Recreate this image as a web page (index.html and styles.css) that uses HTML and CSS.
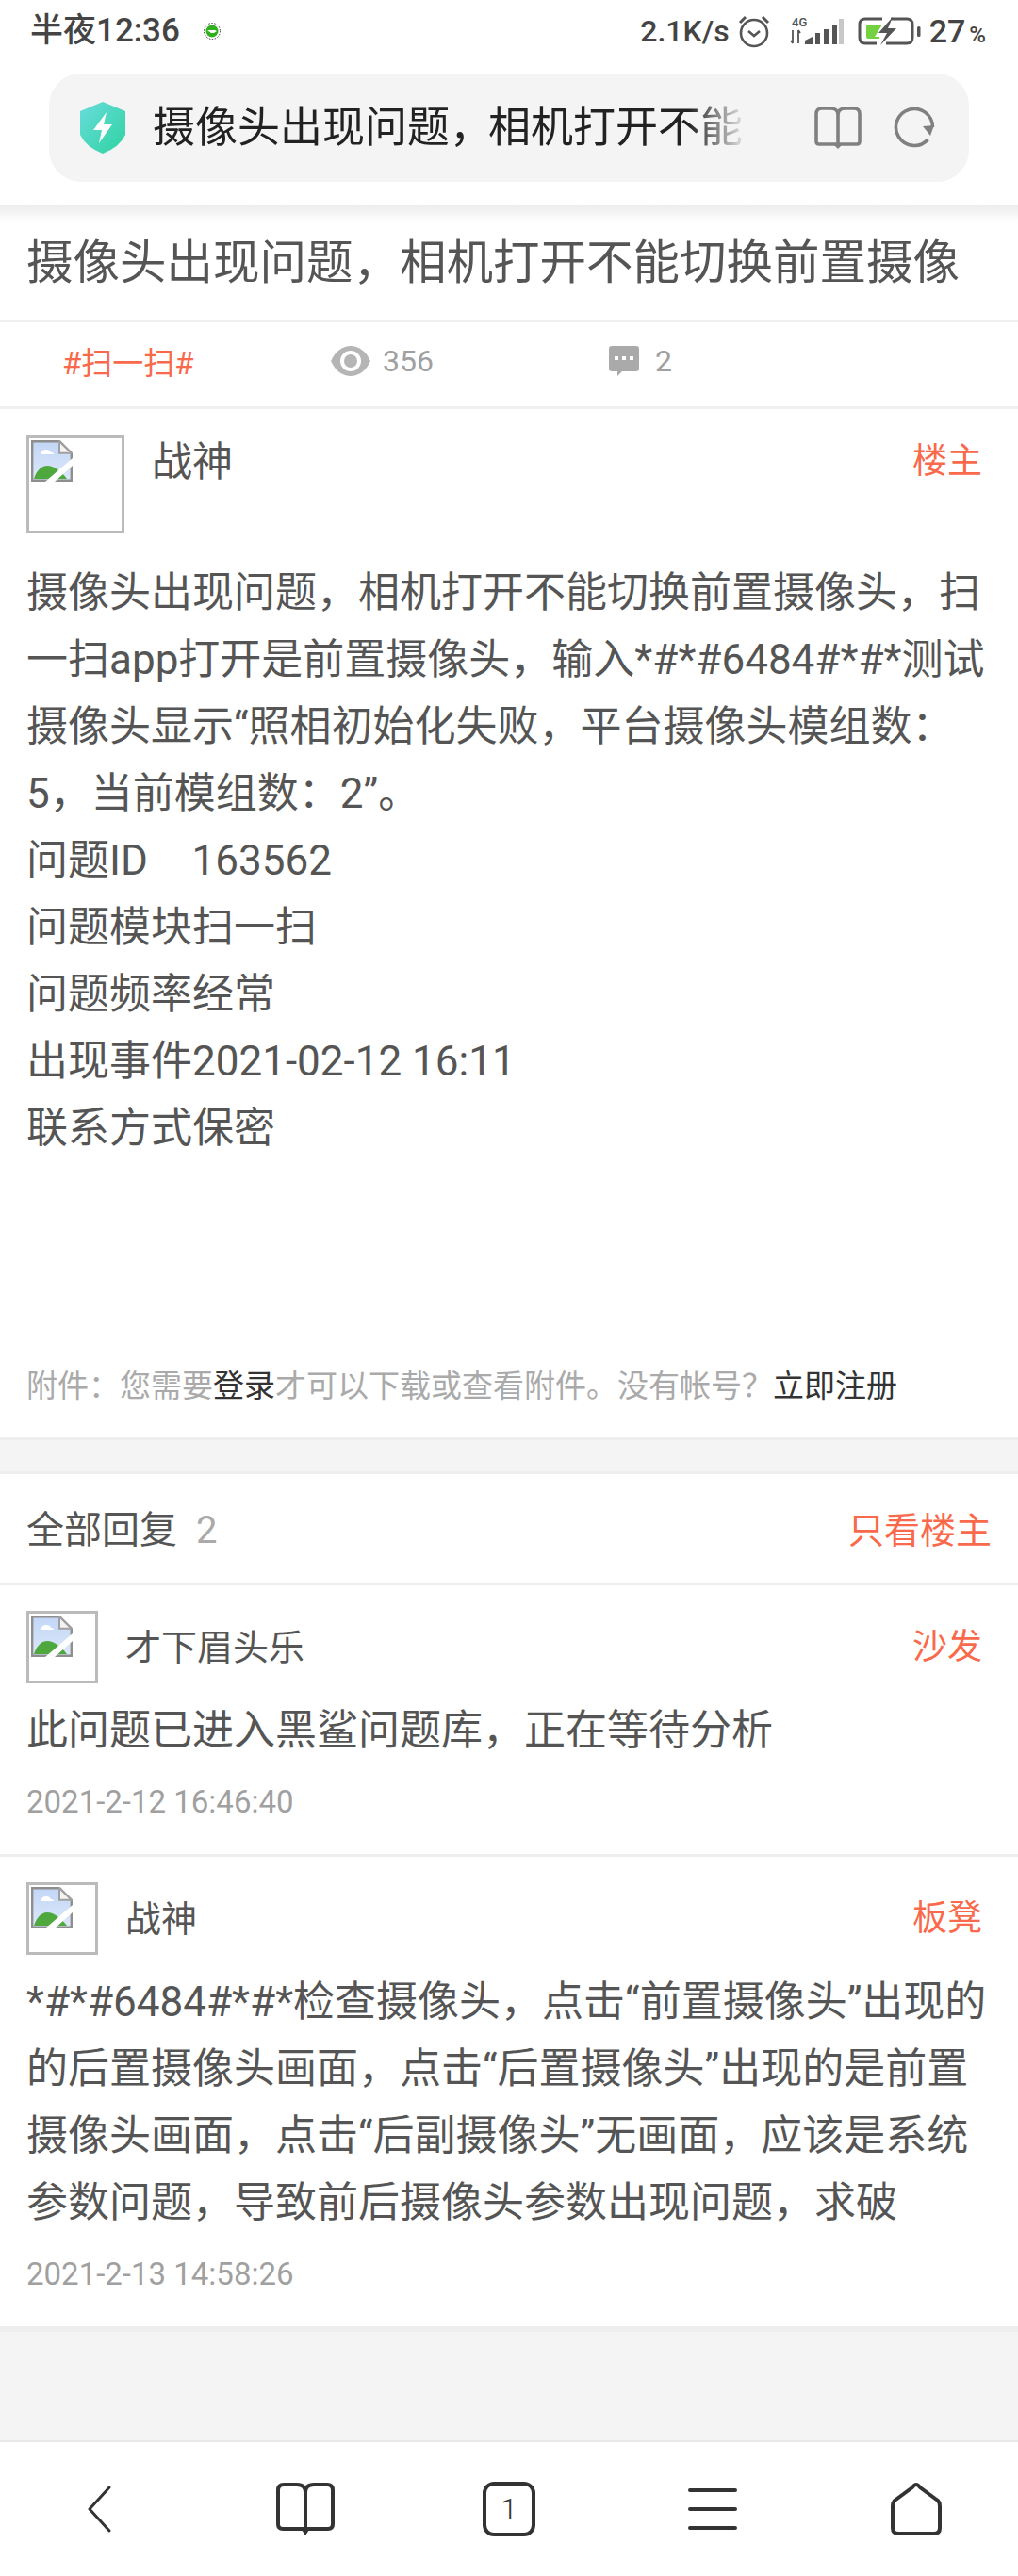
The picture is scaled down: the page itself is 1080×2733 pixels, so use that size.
FILE: index.html
```html
<!DOCTYPE html>
<html lang="zh-CN">
<head>
  <meta charset="UTF-8">
  <title>摄像头出现问题，相机打开不能切换前置摄像</title>
  <link rel="stylesheet" href="styles.css">
</head>
<body>
  <svg class="defs" width="0" height="0">
    <defs>
      <linearGradient id="sky" x1="0" y1="0" x2="0" y2="1">
        <stop offset="0" stop-color="#c2d6f6"/>
        <stop offset="1" stop-color="#dce8fa"/>
      </linearGradient>
    </defs>
    <symbol id="broken" viewBox="0 0 44 44">
      <path d="M1.2 1.2h29l12.6 12.6v29H1.2z" fill="url(#sky)" stroke="#8e8e8e" stroke-width="2.4"/>
      <path d="M30 1.2v12.6h12.8z" fill="#f4f4f4" stroke="#a0a0a0" stroke-width="2"/>
      <path d="M10 15q1-5 6-5 4 0 5 3 3 0 3 2z" fill="#fff"/>
      <path d="M3 41C6 31 12 27 17 27c7 0 15 6 21 14z" fill="#4fa83d"/>
      <path d="M15 44l29-25v8L25 44z" fill="#fff"/>
    </symbol>
  </svg>

  <div class="statusbar">
    <div class="status-left">
      <span class="clock">半夜12:36</span>
      <svg class="wechat" width="18" height="18" viewBox="0 0 18 18">
        <circle cx="9" cy="9" r="8.5" fill="#fff" stroke="#333" stroke-dasharray="1.5 1.5"/>
        <circle cx="9" cy="9" r="6.5" fill="#2fb01c"/>
        <path d="M4 8h8l2 1-3 2H8z" fill="#fff"/>
      </svg>
    </div>
    <div class="status-right">
      <span class="speed">2.1K/s</span>
      <svg class="alarm" width="34" height="36" viewBox="0 0 34 36" fill="none" stroke="#555">
        <circle cx="17" cy="20" r="14" stroke-width="2.6"/>
        <path d="M11 18l6 5 6-5" stroke-width="2.6"/>
        <path d="M2 9l6-6M32 9l-6-6" stroke-width="3"/>
      </svg>
      <svg class="signal" width="58" height="34" viewBox="0 -4 58 34">
        <text x="3" y="10" class="signal-text">4G</text>
        <path d="M4 14v14M2 25l2 3M10 14v14M10 14l2 3" stroke="#555" stroke-width="1.8" fill="none"/>
        <path d="M17 29v-4l8-4v8zM28 29V17h5v12zM37 29V13h5v16zM46 29V8h5v21z" fill="#555"/>
        <path d="M53 29V2h5v27z" fill="#c8c8c8"/>
      </svg>
      <svg class="battery" width="68" height="30" viewBox="0 0 68 30" fill="none">
        <path d="M26 2H8Q2 2 2 8v14q0 6 6 6h12M35 2h17q6 0 6 6v14q0 6-6 6H30" stroke="#555" stroke-width="3"/>
        <path d="M9 10q0-2 2-2h15l-8 13h5v2H11q-2 0-2-2z" fill="#74d13f"/>
        <path d="M37 0L22 17h9l-7 13 17-18h-9z" fill="#555"/>
        <rect x="63" y="10" width="3.5" height="11" rx="1.5" fill="#555"/>
      </svg>
      <span class="level">27<small>%</small></span>
    </div>
  </div>

  <div class="addressbar">
    <svg class="shield" width="48" height="55" viewBox="0 0 48 55">
      <defs>
        <linearGradient id="sh" x1="0" y1="0" x2="1" y2="1">
          <stop offset="0" stop-color="#6adcdc"/>
          <stop offset="1" stop-color="#2dd3a0"/>
        </linearGradient>
      </defs>
      <path d="M24 0l24 10v25q-6 13-24 20Q6 48 0 35V10z" fill="url(#sh)"/>
      <path d="M28 11L14 30h9l-3 14 14-20h-9z" fill="#fff"/>
    </svg>
    <div class="address-text">摄像头出现问题<span class="addr-comma">，</span>相机打开不能</div>
    <svg class="addr-book" width="50" height="46" viewBox="0 0 50 46" fill="none" stroke="#808080" stroke-width="3.6">
      <path d="M25 9Q25 2 17 2H8Q2 2 2 8v29q0 3 3 3h40q3 0 3-3V8q0-6-6-6h-9q-8 0-8 7v31"/>
      <path d="M21 41l4 4 4-4z" fill="#808080" stroke="none"/>
    </svg>
    <svg class="addr-reload" width="44" height="44" viewBox="0 0 44 44" fill="none" stroke="#808080" stroke-width="3.6">
      <path d="M36.5 34A19.5 19.5 0 1 1 41.5 21"/>
      <path d="M31 20l12-1-4 11z" fill="#808080" stroke="none"/>
    </svg>
  </div>
  <div class="toolbar-shadow"></div>

  <h1 class="title">摄像头出现问题，相机打开不能切换前置摄像</h1>

  <div class="meta">
    <span class="meta-tag">#扫一扫#</span>
    <span class="meta-views">
      <svg width="44" height="34" viewBox="0 0 44 34">
        <path d="M1 17C6 6 14 1 22 1s16 5 21 16c-5 11-13 16-21 16S6 28 1 17z" fill="#b5b5b5"/>
        <circle cx="22" cy="17" r="11" fill="#fff"/>
        <circle cx="22" cy="17" r="7" fill="#b5b5b5"/>
      </svg>
      356
    </span>
    <span class="meta-replies">
      <svg width="34" height="33" viewBox="0 0 34 33">
        <path d="M4 1h26q3 0 3 3v21q0 3-3 3H15l-5 5v-5H4q-3 0-3-3V4q0-3 3-3z" fill="#aaa"/>
        <path d="M7 12h4v4H7zM15 12h4v4h-4zM23 12h4v4h-4z" fill="#fff"/>
      </svg>
      2
    </span>
  </div>

  <div class="post">
    <div class="post-head">
      <div class="avatar avatar-big"><svg width="44" height="44"><use href="#broken"/></svg></div>
      <div class="post-name">战神</div>
      <div class="floor">楼主</div>
    </div>
    <div class="post-body">
      摄像头出现问题，相机打开不能切换前置摄像头，扫一扫app打开是前置摄像头，输入*#*#6484#*#*测试摄像头显示“照相初始化失败，平台摄像头模组数：5，当前模组数：2”。<br>
      问题ID&nbsp;&nbsp;&nbsp;&nbsp;<span class="qid">163562</span><br>
      问题模块扫一扫<br>
      问题频率经常<br>
      出现事件2021-02-12 16:11<br>
      联系方式保密
    </div>
    <div class="attach">附件：您需要<a>登录</a>才可以下载或查看附件。没有帐号？<a>立即注册</a></div>
  </div>

  <div class="gap"></div>

  <div class="reply-head">
    <div>全部回复<span class="reply-count">2</span></div>
    <div class="only-op">只看楼主</div>
  </div>

  <div class="reply reply-first">
    <div class="reply-top">
      <div class="avatar"><svg width="44" height="44"><use href="#broken"/></svg></div>
      <div class="reply-name">才下眉头乐</div>
      <div class="floor">沙发</div>
    </div>
    <div class="reply-text">此问题已进入黑鲨问题库，正在等待分析</div>
    <div class="reply-date">2021-2-12 16:46:40</div>
  </div>

  <div class="reply reply-last">
    <div class="reply-top">
      <div class="avatar"><svg width="44" height="44"><use href="#broken"/></svg></div>
      <div class="reply-name">战神</div>
      <div class="floor">板凳</div>
    </div>
    <div class="reply-text">*#*#6484#*#*检查摄像头，点击“前置摄像头”出现的的后置摄像头画面，点击“后置摄像头”出现的是前置摄像头画面，点击“后副摄像头”无画面，应该是系统参数问题，导致前后摄像头参数出现问题，求破</div>
    <div class="reply-date">2021-2-13 14:58:26</div>
  </div>

  <div class="bottom-space"></div>

  <div class="navbar">
    <svg class="nav-back" width="26" height="50" viewBox="0 0 26 50" fill="none" stroke="#333" stroke-width="3" stroke-linecap="round" stroke-linejoin="round">
      <path d="M24 2L3 25l21 23"/>
    </svg>
    <svg width="62" height="56" viewBox="0 0 62 56" fill="none" stroke="#333" stroke-width="4">
      <path d="M31 10Q31 2 22 2H8Q2 2 2 8v36q0 5 5 5h48q5 0 5-5V8q0-6-6-6H40q-9 0-9 8v39"/>
      <path d="M27 50l4 6 4-6z" fill="#333" stroke="none"/>
    </svg>
    <div class="nav-tabs">1</div>
    <div class="nav-menu"><i></i><i></i><i></i></div>
    <svg width="54" height="56" viewBox="0 0 54 56" fill="none" stroke="#333" stroke-width="4" stroke-linejoin="round">
      <path d="M27 2Q25 2 23 5L4 19q-2 2-2 6v23q0 6 6 6h38q6 0 6-6V25q0-4-2-6L31 5q-2-3-4-3z"/>
    </svg>
  </div>
</body>
</html>
```
FILE: styles.css
```css
* { box-sizing: border-box; }
html, body { margin: 0; padding: 0; }
body { width: 1080px; height: 2733px; background: #fff; color: #555; font-family: Roboto, "Noto Sans CJK SC", sans-serif; overflow: hidden; }
.defs { position: absolute; }
a { color: #333; }

.statusbar { height: 78px; display: flex; justify-content: space-between; align-items: center; padding: 0 34px 12px 32px; color: #444; }
.status-left, .status-right { display: flex; align-items: center; }
.clock { font-size: 35px; font-weight: 500; line-height: 40px; }
.wechat { margin-left: 25px; }
.speed { font-size: 32px; font-weight: 500; }
.alarm { margin-left: 9px; }
.signal { margin: -4px 0 0 20px; }
.signal-text { font: 500 13px Roboto, sans-serif; fill: #555; }
.battery { margin-left: 15px; }
.level { font-size: 34px; font-weight: 500; margin-left: 8px; }
.level small { font-size: 24px; margin-left: 4px; }

.addressbar { height: 115px; margin: 0 52px; padding: 0 14px 0 33px; background: #f4f4f4; border-radius: 34px; display: flex; align-items: center; }
.address-text { width: 632px; margin-left: 29px; font-size: 45px; line-height: 60px; color: #222; white-space: nowrap; -webkit-mask-image: linear-gradient(to right, #000 90%, transparent 100%); mask-image: linear-gradient(to right, #000 90%, transparent 100%); }
.addr-comma { margin-right: -4px; }
.addr-book { margin-left: 70px; }
.addr-reload { margin-left: 34px; }
.toolbar-shadow { height: 17px; margin-top: 25px; background: linear-gradient(#ececec, #fff); }

.title { margin: 0; height: 107px; padding: 9px 0 0 28px; font-size: 49.5px; font-weight: 400; line-height: 70px; color: #555; white-space: nowrap; border-bottom: 3px solid #f0f0f0; }
.meta { height: 92px; padding-bottom: 8px; display: flex; align-items: center; border-bottom: 3px solid #f0f0f0; font-size: 33px; color: #a0a0a0; }
.meta-tag { width: 350px; padding-left: 66px; color: #f96a4c; }
.meta-views { width: 295px; display: flex; align-items: center; gap: 12px; font-size: 32px; }
.meta-replies { display: flex; align-items: center; gap: 16px; font-size: 32px; }

.post { padding: 28px 38px 0 28px; height: 1094px; border-bottom: 3px solid #eee; }
.post-head { height: 104px; display: flex; align-items: flex-start; }
.avatar { width: 76px; height: 77px; border: 3px solid #bbb; padding: 2px; flex: none; }
.avatar svg { display: block; }
.avatar-big { width: 104px; height: 104px; }
.post-name { margin-left: 29px; padding-top: 3px; font-size: 43px; line-height: 50px; color: #555; flex: 1; }
.floor { padding-top: 3px; font-size: 37px; line-height: 50px; color: #f96a4c; }
.post-body { margin: 28px -8px 0 0; font-size: 44px; line-height: 71px; color: #555; }
.qid { margin-left: 3px; }
.attach { margin-top: 216px; font-size: 33px; line-height: 44px; color: #aaa; white-space: nowrap; }

.gap { height: 36px; background: #f4f4f4; border-bottom: 3px solid #eee; }

.reply-head { height: 118px; padding: 0 28px 3px; display: flex; justify-content: space-between; align-items: center; border-bottom: 3px solid #eee; font-size: 40px; color: #555; }
.reply-count { margin-left: 20px; color: #aaa; }
.only-op { font-size: 38px; color: #f96a4c; }

.reply { padding: 27px 30px 0 28px; border-bottom: 3px solid #eee; }
.reply-first { height: 288px; }
.reply-last { height: 504px; border-bottom-width: 6px; }
.reply-top { display: flex; align-items: flex-start; padding-right: 8px; height: 77px; }
.reply-name { margin-left: 29px; padding-top: 3px; flex: 1; font-size: 38px; line-height: 72px; color: #555; }
.reply-top .floor { line-height: 72px; }
.reply-text { margin-top: 15px; font-size: 44px; line-height: 71px; color: #555; }
.reply-date { margin-top: 18px; font-size: 33px; line-height: 44px; color: #a0a0a0; }

.bottom-space { height: 117px; background: #f4f4f4; border-bottom: 2px solid #e8e8e8; }

.navbar { height: 142px; display: grid; grid-template-columns: repeat(5, 1fr); justify-items: center; align-items: center; }
.nav-back { margin-right: 6px; }
.nav-tabs { width: 56px; height: 58px; border: 4px solid #333; border-radius: 12px; display: flex; align-items: center; justify-content: center; font-size: 32px; font-weight: 300; color: #333; }
.nav-menu { width: 52px; display: flex; flex-direction: column; gap: 16px; }
.nav-menu i { display: block; height: 4px; background: #333; border-radius: 2px; }
```
